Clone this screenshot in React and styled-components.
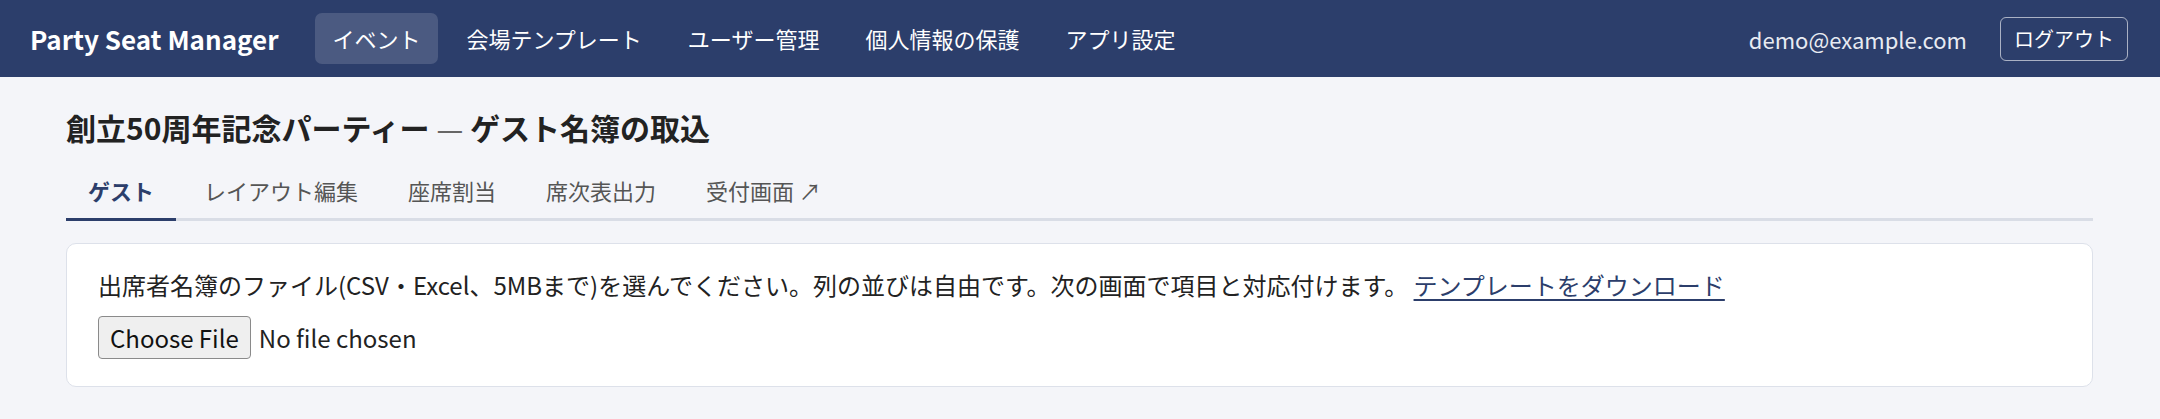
import React from 'react';
import styled, { createGlobalStyle } from 'styled-components';

const GlobalStyle = createGlobalStyle`
    html, body {
        margin: 0;
        padding: 0;
        background: #f4f5f9;
    }
    body {
        font-family: "Noto Sans CJK JP", "Noto Sans", sans-serif;
        color: #222;
    }
`;

const NAV = ['イベント', '会場テンプレート', 'ユーザー管理', '個人情報の保護', 'アプリ設定'];
const TABS = ['ゲスト', 'レイアウト編集', '座席割当', '席次表出力', '受付画面 ↗'];

const App = () => {
    return (
        <>
            <GlobalStyle />
            <Header>
                <Brand>Party Seat Manager</Brand>
                <Nav>
                    {NAV.map((item, i) => (
                        <NavItem key={item} $active={i === 0}>
                            {item}
                        </NavItem>
                    ))}
                </Nav>
                <UserArea>
                    <Email>demo@example.com</Email>
                    <LogoutButton>ログアウト</LogoutButton>
                </UserArea>
            </Header>
            <Main>
                <Title>
                    創立50周年記念パーティー <Dash>—</Dash> ゲスト名簿の取込
                </Title>
                <Tabs>
                    {TABS.map((tab, i) => (
                        <Tab key={tab} $active={i === 0}>
                            {tab}
                        </Tab>
                    ))}
                </Tabs>
                <Card>
                    <Lead>
                        出席者名簿のファイル(CSV・Excel、5MBまで)を選んでください。列の並びは自由です。次の画面で項目と対応付けます。{' '}
                        <TemplateLink href="#">テンプレートをダウンロード</TemplateLink>
                    </Lead>
                    <FileInput type="file" />
                </Card>
            </Main>
        </>
    );
};

export default App;

const Header = styled.header`
    height: 77px;
    background: #2c3e6b;
    display: flex;
    align-items: center;
    padding: 0 32px 0 30px;
    color: #fff;
`;

const Brand = styled.div`
    font-size: 26px;
    font-weight: 700;
    margin-right: 37px;
    white-space: nowrap;
`;

const Nav = styled.nav`
    display: flex;
    align-items: center;
    gap: 12px;
`;

const NavItem = styled.a`
    font-size: 22px;
    line-height: 33px;
    padding: 9px 17px;
    border-radius: 7px;
    color: #fff;
    cursor: pointer;
    white-space: nowrap;
    background: ${(p) => (p.$active ? 'rgba(255, 255, 255, 0.15)' : 'transparent')};
`;

const UserArea = styled.div`
    margin-left: auto;
    display: flex;
    align-items: center;
    gap: 33px;
`;

const Email = styled.span`
    font-size: 22px;
    color: #e8ebf2;
`;

const LogoutButton = styled.button`
    font-family: inherit;
    font-size: 20px;
    line-height: 30px;
    padding: 6px 13px;
    background: transparent;
    color: #fff;
    border: 1px solid rgba(255, 255, 255, 0.6);
    border-radius: 6px;
    cursor: pointer;
`;

const Main = styled.main`
    padding: 29px 67px 40px 66px;
`;

const Title = styled.h1`
    margin: 0;
    font-size: 30px;
    line-height: 42px;
    font-weight: 700;
    color: #222;
`;

const Dash = styled.span`
    font-weight: 400;
    color: #666;
`;

const Tabs = styled.div`
    display: flex;
    gap: 6px;
    margin-top: 14px;
    border-bottom: 3px solid #d9dde6;
`;

const Tab = styled.div`
    font-size: 22px;
    line-height: 33px;
    padding: 12px 22px 11px;
    margin-bottom: -3px;
    border-bottom: 3px solid ${(p) => (p.$active ? '#2c3e6b' : 'transparent')};
    color: ${(p) => (p.$active ? '#2c3e6b' : '#555')};
    font-weight: ${(p) => (p.$active ? 700 : 400)};
    cursor: pointer;
    white-space: nowrap;
`;

const Card = styled.section`
    margin-top: 22px;
    background: #fff;
    border: 1px solid #dde1ea;
    border-radius: 10px;
    padding: 22px 31px 27px;
`;

const Lead = styled.p`
    margin: 0 0 12px;
    font-size: 24px;
    line-height: 38px;
    color: #222;
`;

const TemplateLink = styled.a`
    color: #2c3e6b;
    text-decoration: underline;
    text-underline-offset: 4px;
`;

const FileInput = styled.input`
    font-family: inherit;
    font-size: 24px;
    color: #222;

    &::file-selector-button {
        font-family: inherit;
        font-size: 24px;
        line-height: 33px;
        padding: 4px 11px;
        margin-right: 8px;
        background: #efefef;
        color: #111;
        border: 1px solid #8a8a8a;
        border-radius: 4px;
        cursor: pointer;
    }
`;
